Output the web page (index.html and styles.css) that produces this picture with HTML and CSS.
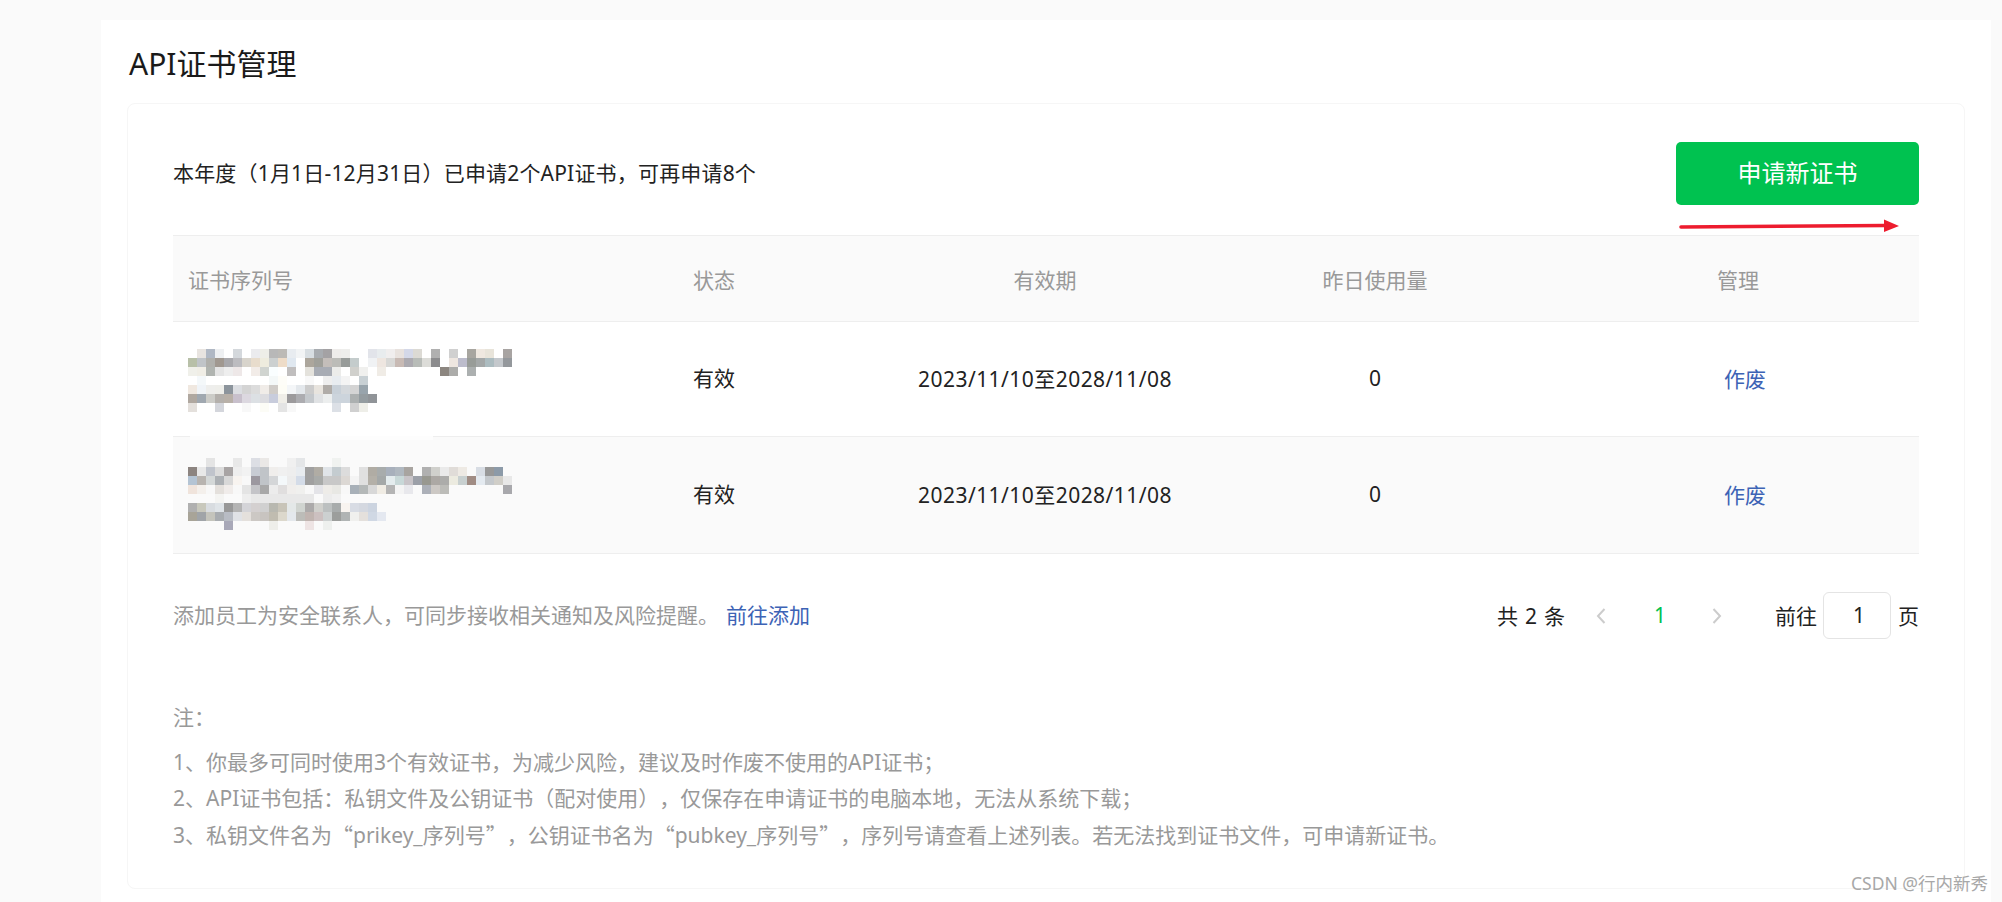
FILE: index.html
```html
<!DOCTYPE html>
<html lang="zh-CN">
<head>
<meta charset="utf-8">
<title>API证书管理</title>
<link rel="stylesheet" href="styles.css">
</head>
<body>
<main class="panel">
  <h1 class="title">API证书管理</h1>
  <section class="card">
    <div class="top-row">
      <p class="quota">本年度（1月1日-12月31日）已申请2个API证书，可再申请8个</p>
      <button class="apply-btn" type="button">申请新证书</button>
    </div>
    <svg class="arrow" width="224" height="16" viewBox="0 0 224 16" aria-hidden="true">
      <path d="M2 9 L206 7.5" stroke="#ed1c2e" stroke-width="3.6" stroke-linecap="round" fill="none"/>
      <path d="M205 1.5 L220 8 L205 14 Z" fill="#ed1c2e"/>
    </svg>
    <table class="cert-table">
      <colgroup>
        <col class="c1"><col class="c2"><col class="c3"><col class="c4"><col class="c5">
      </colgroup>
      <thead>
        <tr>
          <th class="left serial">证书序列号</th>
          <th class="left">状态</th>
          <th>有效期</th>
          <th>昨日使用量</th>
          <th>管理</th>
        </tr>
      </thead>
      <tbody>
        <tr>
          <td class="left serial">
            <svg class="mosaic" width="324" height="63" viewBox="0 0 324 63" aria-label="已打码的证书序列号">
              <g>
                <rect x="9" fill="#e8e4e0"/><rect x="18" fill="#b0b8c4"/><rect x="27" fill="#eef0f2"/><rect x="45" fill="#d4d8dc"/><rect x="63" fill="#ebebee"/><rect x="72" fill="#eeeee8"/><rect x="81" fill="#b8b8b8"/><rect x="90" fill="#bcbab6"/><rect x="99" fill="#e8ecf0"/><rect x="108" fill="#f2f4f5"/><rect x="117" fill="#d8dee2"/><rect x="126" fill="#a8acb0"/><rect x="135" fill="#a4a2a4"/><rect x="144" fill="#eeecea"/><rect x="153" fill="#eeeeec"/><rect x="180" fill="#e2e4ea"/><rect x="189" fill="#e8ecee"/><rect x="198" fill="#f0eeee"/><rect x="207" fill="#e8e2de"/><rect x="216" fill="#d4d8e8"/><rect x="225" fill="#dcdad4"/><rect x="243" fill="#b0b0b0"/><rect x="261" fill="#d0d0d0"/><rect x="279" fill="#a8a6a0"/><rect x="288" fill="#efe8e0"/><rect x="297" fill="#e8e4da"/><rect x="315" fill="#a8a4a2"/>
              </g>
              <g transform="translate(0 9)">
                <rect x="0" fill="#b8c0a8"/><rect x="9" fill="#c0c4c8"/><rect x="18" fill="#b0b0ac"/><rect x="27" fill="#a09890"/><rect x="36" fill="#a8a8ac"/><rect x="45" fill="#bcbcc0"/><rect x="54" fill="#d8d4cc"/><rect x="63" fill="#e8dccc"/><rect x="72" fill="#eeecde"/><rect x="81" fill="#ccd0d0"/><rect x="90" fill="#eedcc8"/><rect x="99" fill="#e0e8f0"/><rect x="117" fill="#aca69c"/><rect x="126" fill="#a0a09a"/><rect x="135" fill="#c4beba"/><rect x="144" fill="#bcbcb8"/><rect x="153" fill="#989c9a"/><rect x="162" fill="#c4cccc"/><rect x="180" fill="#f0f2f4"/><rect x="189" fill="#eee6e0"/><rect x="198" fill="#d8d8d6"/><rect x="207" fill="#c8bab4"/><rect x="216" fill="#acaab0"/><rect x="225" fill="#b8bcb8"/><rect x="234" fill="#dcdcd8"/><rect x="243" fill="#8c8c8e"/><rect x="261" fill="#eee6e0"/><rect x="270" fill="#bcbccc"/><rect x="279" fill="#989c98"/><rect x="288" fill="#a4a8a8"/><rect x="297" fill="#acbcc0"/><rect x="306" fill="#c4c8cc"/><rect x="315" fill="#94989c"/>
              </g>
              <g transform="translate(0 18)">
                <rect x="0" fill="#f0f0ea"/><rect x="9" fill="#f0eee6"/><rect x="18" fill="#b0b4b0"/><rect x="27" fill="#e4e4e4"/><rect x="36" fill="#eeeeee"/><rect x="45" fill="#eee8e8"/><rect x="63" fill="#f2ece8"/><rect x="72" fill="#d0d4d0"/><rect x="81" fill="#fafeff"/><rect x="99" fill="#c0bebe"/><rect x="117" fill="#e4e2dc"/><rect x="126" fill="#a8acb4"/><rect x="135" fill="#a8acb4"/><rect x="144" fill="#ececea"/><rect x="162" fill="#d0d0cc"/><rect x="171" fill="#f0f0ee"/><rect x="189" fill="#f0ece6"/><rect x="252" fill="#8c8680"/><rect x="261" fill="#acacaa"/><rect x="279" fill="#acb0b0"/>
              </g>
              <g transform="translate(0 27)">
                <rect x="9" fill="#f4f8fa"/><rect x="81" fill="#f4f8f8"/><rect x="90" fill="#fefdf8"/><rect x="117" fill="#f8f8f8"/><rect x="135" fill="#eeeeee"/><rect x="144" fill="#e8ecf0"/><rect x="153" fill="#f4f4f4"/><rect x="171" fill="#c8d0d4"/>
              </g>
              <g transform="translate(0 36)">
                <rect x="0" fill="#f0e8e0"/><rect x="9" fill="#f0f4f8"/><rect x="18" fill="#eeeeec"/><rect x="27" fill="#eeeeea"/><rect x="36" fill="#8c949c"/><rect x="45" fill="#dcdee2"/><rect x="54" fill="#d4d4d4"/><rect x="63" fill="#dcdcdc"/><rect x="72" fill="#f0ece8"/><rect x="81" fill="#d0ccc8"/><rect x="90" fill="#fefdf6"/><rect x="99" fill="#f4f6f8"/><rect x="108" fill="#e4e8ec"/><rect x="117" fill="#cccccc"/><rect x="126" fill="#e8e4de"/><rect x="135" fill="#b0aca8"/><rect x="144" fill="#c8d0d8"/><rect x="153" fill="#d4d8dc"/><rect x="162" fill="#d4d4d4"/><rect x="171" fill="#98a4ac"/>
              </g>
              <g transform="translate(0 45)">
                <rect x="0" fill="#b0a8a0"/><rect x="9" fill="#a0a8b0"/><rect x="18" fill="#ccccc8"/><rect x="27" fill="#b4b0ac"/><rect x="36" fill="#b8b0a8"/><rect x="45" fill="#c8c0cc"/><rect x="54" fill="#dcd8e0"/><rect x="63" fill="#dce0e4"/><rect x="72" fill="#dcdce0"/><rect x="81" fill="#c8ccdc"/><rect x="90" fill="#f0eee8"/><rect x="99" fill="#9c9a9c"/><rect x="108" fill="#acacb0"/><rect x="117" fill="#c4c8cc"/><rect x="126" fill="#e0e2e4"/><rect x="135" fill="#eceeee"/><rect x="144" fill="#ccd4dc"/><rect x="153" fill="#ccd4dc"/><rect x="162" fill="#acb0b0"/><rect x="171" fill="#949ca0"/><rect x="180" fill="#909498"/>
              </g>
              <g transform="translate(0 54)">
                <rect x="0" fill="#e4e0dc"/><rect x="27" fill="#d4d6dc"/><rect x="54" fill="#f8f8f8"/><rect x="72" fill="#fcfcf6"/><rect x="90" fill="#e4e4e4"/><rect x="99" fill="#f8f8f8"/><rect x="144" fill="#dce0e6"/><rect x="162" fill="#d0d0d0"/><rect x="171" fill="#eeeee8"/>
              </g>
            </svg>
          </td>
          <td class="left status">有效</td>
          <td class="date">2023/11/10至2028/11/08</td>
          <td>0</td>
          <td class="action"><a class="link" href="#">作废</a></td>
        </tr>
        <tr>
          <td class="left serial">
            <svg class="mosaic" width="324" height="72" viewBox="0 0 324 72" aria-label="已打码的证书序列号">
              <path class="smear" d="M2 -22h243v4h-243z"/>
              <g>
                <rect x="18" fill="#e4e4e4"/><rect x="45" fill="#e8e8e8"/><rect x="63" fill="#dcdee4"/><rect x="72" fill="#eae8e6"/><rect x="99" fill="#f0f0f0"/><rect x="108" fill="#e4e6e8"/><rect x="144" fill="#f0f2f0"/>
              </g>
              <g transform="translate(0 9)">
                <rect x="0" fill="#8c8480"/><rect x="9" fill="#e8e8e8"/><rect x="18" fill="#c0c4cc"/><rect x="27" fill="#dcdcdc"/><rect x="36" fill="#a8a4a4"/><rect x="45" fill="#eeeeee"/><rect x="54" fill="#f2f2f2"/><rect x="63" fill="#c8ccd4"/><rect x="72" fill="#c0c4c8"/><rect x="81" fill="#f0eeec"/><rect x="90" fill="#f0f0f0"/><rect x="99" fill="#eeeeee"/><rect x="108" fill="#e8ecf0"/><rect x="117" fill="#a0a0a0"/><rect x="126" fill="#b0aca4"/><rect x="135" fill="#e0e4e8"/><rect x="144" fill="#c4ccd0"/><rect x="153" fill="#dcdcdc"/><rect x="171" fill="#e0e0e0"/><rect x="180" fill="#b0aca4"/><rect x="189" fill="#a8acac"/><rect x="198" fill="#a8b0bc"/><rect x="207" fill="#b0b8c0"/><rect x="216" fill="#a8a4a0"/><rect x="234" fill="#b0b0b0"/><rect x="243" fill="#d0d0cc"/><rect x="252" fill="#eaeaea"/><rect x="261" fill="#e0dcd8"/><rect x="270" fill="#eeeae4"/><rect x="288" fill="#d8dde4"/><rect x="297" fill="#989898"/><rect x="306" fill="#8c9aa8"/>
              </g>
              <g transform="translate(0 18)">
                <rect x="0" fill="#b4c4d4"/><rect x="9" fill="#b8b4b0"/><rect x="18" fill="#d4d8d8"/><rect x="27" fill="#acb0b4"/><rect x="36" fill="#d8d8d8"/><rect x="45" fill="#f8f4f0"/><rect x="54" fill="#f8f8f8"/><rect x="63" fill="#9c98a0"/><rect x="72" fill="#c0c4c8"/><rect x="81" fill="#d4d6d8"/><rect x="90" fill="#f4f8fa"/><rect x="99" fill="#ececec"/><rect x="108" fill="#d4dce8"/><rect x="117" fill="#a0a0a0"/><rect x="126" fill="#a8aaa8"/><rect x="135" fill="#c8c8c8"/><rect x="144" fill="#c8c8c8"/><rect x="153" fill="#dcd8d4"/><rect x="162" fill="#f4f4f4"/><rect x="171" fill="#e0e0e0"/><rect x="180" fill="#b4b0a8"/><rect x="189" fill="#a4a8a8"/><rect x="198" fill="#e4ecee"/><rect x="207" fill="#c8d8d8"/><rect x="216" fill="#c8c4c8"/><rect x="225" fill="#9ca0a8"/><rect x="234" fill="#989890"/><rect x="243" fill="#aca8a4"/><rect x="252" fill="#acacaa"/><rect x="261" fill="#ecebe0"/><rect x="270" fill="#c8d0d0"/><rect x="279" fill="#a08c84"/><rect x="288" fill="#e4eaf0"/><rect x="297" fill="#c4c8cc"/><rect x="306" fill="#d0cec8"/><rect x="315" fill="#e8e8e8"/>
              </g>
              <g transform="translate(0 27)">
                <rect x="0" fill="#f0e4dc"/><rect x="9" fill="#f4f0ec"/><rect x="18" fill="#f8f8f8"/><rect x="27" fill="#e4e0dc"/><rect x="36" fill="#f0ecea"/><rect x="45" fill="#f8f8f8"/><rect x="54" fill="#e4e4e4"/><rect x="63" fill="#c4c4c8"/><rect x="72" fill="#a8a8a8"/><rect x="81" fill="#ececec"/><rect x="90" fill="#e0dede"/><rect x="99" fill="#f0eeec"/><rect x="108" fill="#f0f0ee"/><rect x="117" fill="#f8f8f8"/><rect x="126" fill="#e4e4e8"/><rect x="135" fill="#eeece8"/><rect x="144" fill="#e8e8e4"/><rect x="153" fill="#f8f8f8"/><rect x="162" fill="#a8b0b8"/><rect x="171" fill="#b4b8b8"/><rect x="180" fill="#d8d8d8"/><rect x="189" fill="#f0ece4"/><rect x="198" fill="#b4b4b4"/><rect x="207" fill="#f4f4f4"/><rect x="216" fill="#e8e8ec"/><rect x="234" fill="#acb0b8"/><rect x="243" fill="#ccc8c4"/><rect x="252" fill="#bcbcb8"/><rect x="315" fill="#a8a8ac"/>
              </g>
              <g transform="translate(0 36)">
                <rect x="27" fill="#f4f4f2"/><rect x="54" fill="#eeeeee"/><rect x="63" fill="#e8e8e8"/><rect x="72" fill="#e8e8e8"/><rect x="81" fill="#e8e8e8"/><rect x="90" fill="#e8e8e8"/><rect x="99" fill="#e8e8e8"/><rect x="108" fill="#e8e8e8"/><rect x="117" fill="#e8e8e8"/><rect x="135" fill="#ececec"/><rect x="144" fill="#f0f0f0"/>
              </g>
              <g transform="translate(0 45)">
                <rect x="0" fill="#b0b0b0"/><rect x="9" fill="#c8c8bc"/><rect x="18" fill="#d8dce0"/><rect x="27" fill="#dfe4e8"/><rect x="36" fill="#989898"/><rect x="45" fill="#b4b4b4"/><rect x="54" fill="#d4d4d8"/><rect x="63" fill="#d4d0d0"/><rect x="72" fill="#d0d0d0"/><rect x="81" fill="#b8b8b0"/><rect x="90" fill="#c8c4b8"/><rect x="99" fill="#e4e8e8"/><rect x="108" fill="#d0d4d0"/><rect x="117" fill="#acaaaa"/><rect x="126" fill="#d0d0cc"/><rect x="135" fill="#bcc0c0"/><rect x="144" fill="#a8acac"/><rect x="153" fill="#f8f4f0"/><rect x="162" fill="#d8dce4"/><rect x="171" fill="#d4d8e0"/><rect x="180" fill="#ccd4e0"/>
              </g>
              <g transform="translate(0 54)">
                <rect x="0" fill="#a8a498"/><rect x="9" fill="#a0a4a8"/><rect x="18" fill="#c4c4bc"/><rect x="27" fill="#a8acb0"/><rect x="36" fill="#b8bcc4"/><rect x="45" fill="#e0e2e6"/><rect x="54" fill="#e4e0dc"/><rect x="63" fill="#ccc8c4"/><rect x="72" fill="#c8c4c0"/><rect x="81" fill="#c0bcb0"/><rect x="90" fill="#dcd8cc"/><rect x="99" fill="#e4e8ec"/><rect x="108" fill="#bcbcb8"/><rect x="117" fill="#c0b4b0"/><rect x="126" fill="#ccc0c0"/><rect x="135" fill="#ccd0d0"/><rect x="144" fill="#9c9e9c"/><rect x="153" fill="#b0b4b4"/><rect x="162" fill="#f0f0ee"/><rect x="171" fill="#e4e0dc"/><rect x="180" fill="#d0d8e4"/><rect x="189" fill="#e4e8f0"/>
              </g>
              <g transform="translate(0 63)">
                <rect x="36" fill="#a8a8b8"/><rect x="81" fill="#eeeeea"/><rect x="117" fill="#eee4e4"/><rect x="135" fill="#eef0ee"/>
              </g>
            </svg>
          </td>
          <td class="left status">有效</td>
          <td class="date">2023/11/10至2028/11/08</td>
          <td>0</td>
          <td class="action"><a class="link" href="#">作废</a></td>
        </tr>
      </tbody>
    </table>
    <div class="tool-row">
      <p class="hint">添加员工为安全联系人，可同步接收相关通知及风险提醒。 <a class="link" href="#">前往添加</a></p>
      <nav class="pager">
        <span class="total">共 2 条</span>
        <svg class="chev prev" width="12" height="18" viewBox="0 0 12 18" aria-hidden="true"><path d="M9.5 2 L3 9 L9.5 16"/></svg>
        <span class="page-current">1</span>
        <svg class="chev next" width="12" height="18" viewBox="0 0 12 18" aria-hidden="true"><path d="M2.5 2 L9 9 L2.5 16"/></svg>
        <span class="goto">前往</span>
        <span class="page-input">1</span>
        <span class="goto-end">页</span>
      </nav>
    </div>
    <div class="notes">
      <p class="note-head">注：</p>
      <p>1、你最多可同时使用3个有效证书，为减少风险，建议及时作废不使用的API证书；</p>
      <p>2、API证书包括：私钥文件及公钥证书（配对使用），仅保存在申请证书的电脑本地，无法从系统下载；</p>
      <p>3、私钥文件名为<span class="cjk">“</span>prikey_序列号<span class="cjk">”</span>，公钥证书名为<span class="cjk">“</span>pubkey_序列号<span class="cjk">”</span>，序列号请查看上述列表。若无法找到证书文件，可申请新证书。</p>
    </div>
  </section>
</main>
<div class="watermark">CSDN @行内新秀</div>
</body>
</html>
```
FILE: styles.css
```css
* { box-sizing: border-box; }
html, body { height: 100%; }
body {
  margin: 0;
  height: 902px;
  overflow: hidden;
  background: #fafafa;
  font-family: "Noto Sans", "Noto Sans CJK SC", sans-serif;
  font-size: 21px;
  color: #222;
  text-spacing-trim: space-all;
}
p { margin: 0; }
.cjk { font-family: "Noto Sans CJK SC", sans-serif; }
.panel {
  margin: 20px 0 0 101px;
  width: 1890px;
  height: 882px;
  background: #fff;
  padding: 0 26px;
}
.title {
  margin: 0;
  height: 83px;
  padding: 22px 0 0 2px;
  font-size: 30px;
  line-height: 44px;
  font-weight: 400;
  color: #1a1a1a;
}
.card {
  position: relative;
  height: 786px;
  border: 1px solid #f6f6f6;
  border-radius: 8px;
  padding: 38px 45px 0;
}
.top-row {
  display: flex;
  justify-content: space-between;
  align-items: center;
  height: 63px;
}
.quota { padding-bottom: 3px; letter-spacing: 0.18px; }
.apply-btn {
  width: 243px;
  height: 63px;
  border: 0;
  border-radius: 5px;
  background: #00c250;
  color: #fff;
  font: inherit;
  font-size: 24px;
  padding: 0 0 4px;
}
.arrow {
  position: absolute;
  left: 1551px;
  top: 114px;
}
.cert-table {
  margin-top: 30px;
  width: 1746px;
  border-collapse: collapse;
  table-layout: fixed;
}
.c1 { width: 520px; }
.c2 { width: 204px; }
.c3 { width: 296px; }
.c4 { width: 364px; }
.c5 { width: 362px; }
.cert-table th {
  height: 86px;
  padding: 0;
  font-weight: 400;
  color: #999;
  background: #fafafa;
  border-top: 1px solid #eee;
  border-bottom: 1px solid #eee;
  text-align: center;
}
.cert-table td {
  padding: 0 0 3px;
  text-align: center;
  border-bottom: 1px solid #eee;
}
.cert-table tbody tr { height: 117px; }
.cert-table tbody tr:first-child { height: 115px; }
.cert-table tbody tr:nth-child(2) { background: #fafafa; }
.cert-table .left { text-align: left; }
.cert-table th.serial { padding-left: 15px; }
.cert-table td.serial { padding: 3px 0 0 15px; }
.cert-table tr:nth-child(2) td.serial { padding: 0 0 3px 15px; }
.cert-table .status { padding-bottom: 5px; }
.cert-table .action { padding-left: 14px; }
.cert-table .date { letter-spacing: 0.45px; }
.mosaic { display: block; overflow: visible; }
.mosaic rect { width: 9px; height: 9px; }
.smear { fill: #fdfdfd; }
.link { color: #3d63b5; text-decoration: none; }
.tool-row {
  display: flex;
  justify-content: space-between;
  align-items: center;
  margin-top: 38px;
  height: 47px;
}
.hint { color: #999; padding-bottom: 3px; word-spacing: 1.5px; }
.pager { display: flex; align-items: center; }
.total { margin-right: 30px; padding-bottom: 2px; word-spacing: 1.5px; }
.chev { fill: none; stroke: #ccc; stroke-width: 2; }
.page-current { width: 104px; text-align: center; color: #00c250; padding: 0 0 2px 2px; }
.goto { margin-left: 52px; margin-right: 6px; padding-bottom: 2px; }
.page-input {
  width: 68px;
  height: 47px;
  border: 1px solid #e4e4e4;
  border-radius: 6px;
  display: flex;
  align-items: center;
  justify-content: center;
  padding: 0 0 2px 4px;
}
.goto-end { margin-left: 7px; padding-bottom: 2px; }
.notes {
  margin-top: 60px;
  color: #999;
  line-height: 36px;
}
.note-head { margin-bottom: 9px; }
.watermark {
  position: absolute;
  left: 1851px;
  top: 871px;
  font-size: 17.5px;
  line-height: 24px;
  color: #a8a8a8;
}
```
